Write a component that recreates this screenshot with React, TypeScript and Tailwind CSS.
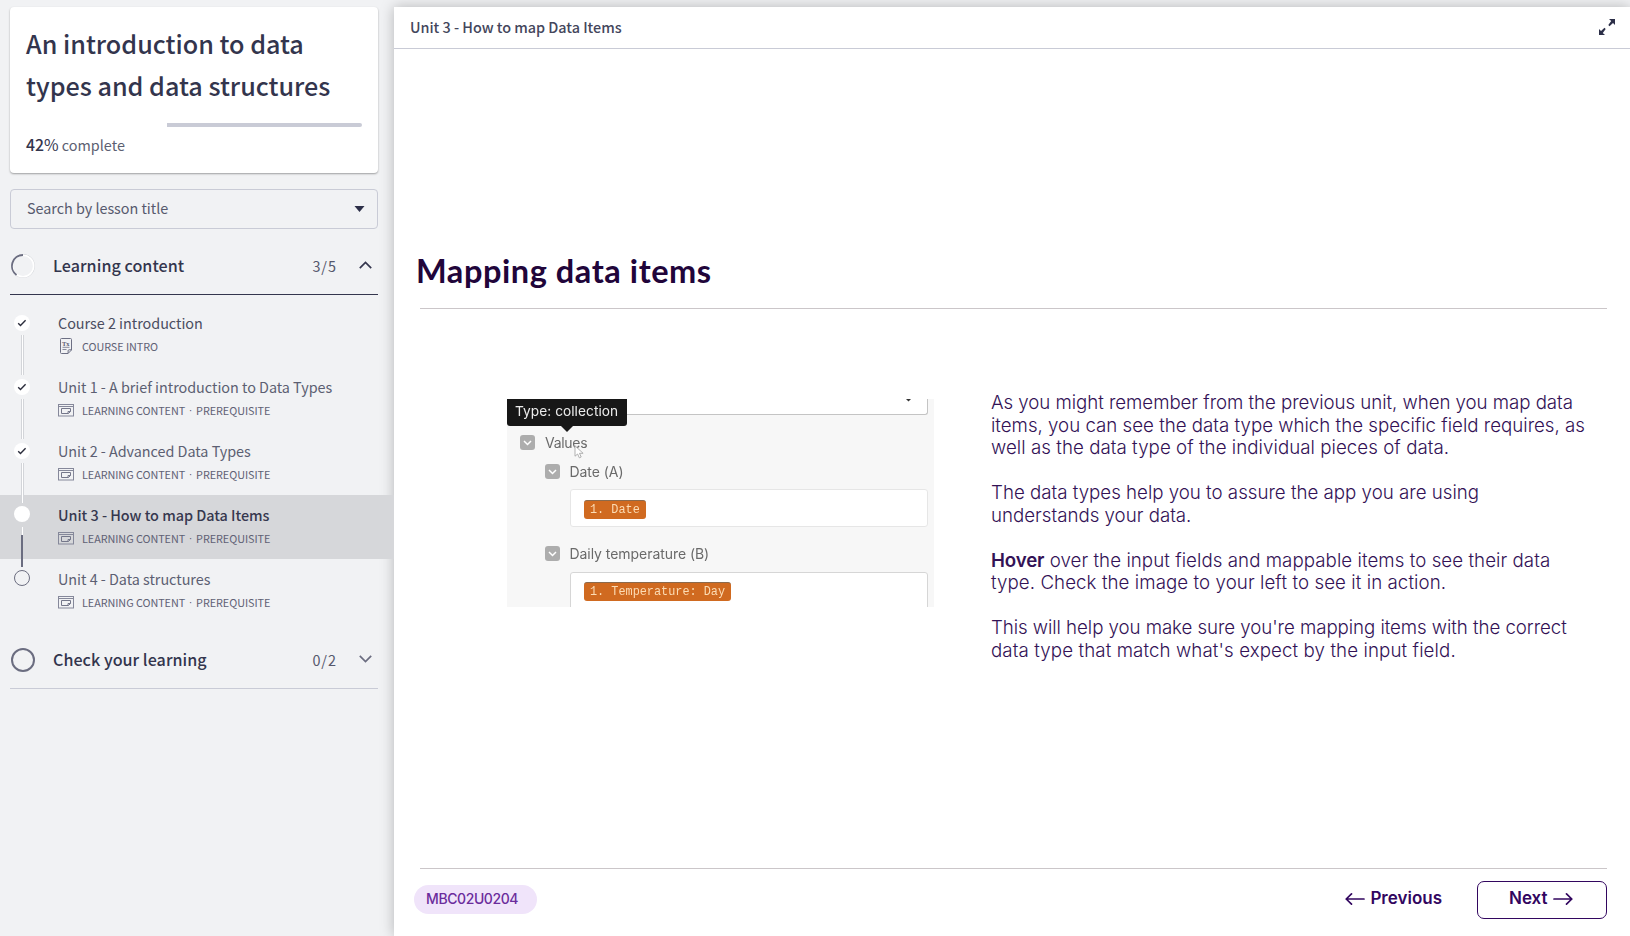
import type { ReactNode } from "react";

type Status = "done" | "current" | "todo";

interface Lesson {
  title: string;
  tags: string[];
  status: Status;
  intro?: boolean;
}

const lessons: Lesson[] = [
  { title: "Course 2 introduction", tags: ["COURSE INTRO"], status: "done", intro: true },
  { title: "Unit 1 - A brief introduction to Data Types", tags: ["LEARNING CONTENT", "PREREQUISITE"], status: "done" },
  { title: "Unit 2 - Advanced Data Types", tags: ["LEARNING CONTENT", "PREREQUISITE"], status: "done" },
  { title: "Unit 3 - How to map Data Items", tags: ["LEARNING CONTENT", "PREREQUISITE"], status: "current" },
  { title: "Unit 4 - Data structures", tags: ["LEARNING CONTENT", "PREREQUISITE"], status: "todo" },
];

function IntroIcon() {
  return (
    <svg width="16" height="16" viewBox="0 0 16 16" fill="none" stroke="#6d7084" strokeWidth="1">
      <path d="M3.5 .5h9a1 1 0 0 1 1 1v10.500l-3.500 3.500H3.500a1 1 0 0 1-1-1v-13a1 1 0 0 1 1-1z" />
      <path d="M13.500 11.800h-2.400a1 1 0 0 0-1 1v2.600" />
      <path d="M4.500 9.300h7M4.500 11.500h4" strokeWidth=".8" />
      <text x="4" y="7.500" fontSize="6.500" fontWeight="700" fontFamily="Liberation Serif, serif" fill="#5a5d72" stroke="none">
        Tx
      </text>
    </svg>
  );
}

function ContentIcon() {
  return (
    <svg width="16" height="14" viewBox="0 0 16 14" fill="none" stroke="#85889a" strokeWidth="1">
      <rect x=".5" y="1.500" width="15" height="11.500" />
      <path d="M.5 3.500h15" />
      <path d="M3.500 5.500h9v3l-2 2h-7z" stroke="#74778a" />
      <path d="M12.500 8.500h-2.500v2" stroke="#74778a" />
    </svg>
  );
}

function StatusDot({ status }: { status: Status }) {
  if (status === "todo") return <span className="-mt-px block size-4 rounded-full border border-[#6c6e80]" />;
  return (
    <span className={`flex size-4 items-center justify-center rounded-full bg-white ${status === "current" ? "-mt-px" : ""}`}>
      {status === "done" && (
        <svg width="10" height="8" viewBox="0 0 10 8" fill="none" stroke="#2b2d3c" strokeWidth="1.4">
          <path d="M1.200 4.200l2.300 2.300L8.600 1.200" />
        </svg>
      )}
    </span>
  );
}

function Connector({ status }: { status: Status }) {
  return (
    <span className="absolute top-8 left-[21px] z-10 flex h-10 w-[3px] flex-col">
      {status === "current" ? (
        <>
          <span className="h-2 w-px self-center bg-white" />
          <span className="w-0.5 flex-1 bg-[#6b6d80]" />
        </>
      ) : (
        <span className="flex-1 border-x border-[#d3d5d9] bg-white" />
      )}
    </span>
  );
}

function LessonRow({ lesson, last }: { lesson: Lesson; last: boolean }) {
  const current = lesson.status === "current";
  return (
    <li className={`relative flex h-16 pl-3.5 ${current ? "bg-[#d6d7da]" : ""}`}>
      <div className="w-11 pt-3">
        <StatusDot status={lesson.status} />
        {!last && <Connector status={lesson.status} />}
      </div>
      <div className="pt-[10px]">
        <p className={`h-5 text-[14.4px] leading-5 tracking-[-0.025px] ${current ? "font-medium text-[#36384f]" : lesson.intro ? "text-[#4a4d60]" : "text-[#5c5f72]"}`}>
          {lesson.title}
        </p>
        <p className="mt-1 flex h-[18px] items-center text-[10.8px] leading-[18px] text-[#5f6175]">
          <span className="mr-2">{lesson.intro ? <IntroIcon /> : <ContentIcon />}</span>
          <span className="tracking-[-0.04px]">{lesson.tags[0]}</span>
          {lesson.tags[1] && (
            <>
              <span className="w-[11px] text-center font-['Liberation_Sans',sans-serif]">·</span>
              <span className="tracking-[-0.04px]">{lesson.tags[1]}</span>
            </>
          )}
        </p>
      </div>
    </li>
  );
}

function SectionHeader({ title, count, open, ring }: { title: string; count: string; open: boolean; ring: ReactNode }) {
  return (
    <div className={`mr-4 ml-[10px] flex h-[58px] items-center border-b pr-1.5 ${open ? "border-[#34364e]" : "border-[#c9cbd6]"}`}>
      <span className="w-[43px] pl-px">{ring}</span>
      <h2 className="-mt-0.5 flex-1 text-[16.100px] leading-6 font-medium tracking-[0.040px] text-[#33354d]">{title}</h2>
      <span className="mr-[22px] text-[14.4px] leading-6 tracking-[1px] text-[#55586c]">{count}</span>
      <svg className="-mt-px" width="13" height="8" viewBox="0 0 13 8" fill="none" stroke={open ? "#34364e" : "#6b6d80"} strokeWidth="1.700">
        <path d={open ? "M.8 7.200l5.700-5.700 5.700 5.700" : "M.8 .8l5.700 5.700L12.200 .8"} />
      </svg>
    </div>
  );
}

function Sidebar() {
  return (
    <aside className="w-[394px] shrink-0 pt-[7px] font-['Noto_Sans_CJK_SC',sans-serif]">
      <div className="mr-4 ml-[10px] h-[166px] rounded bg-white px-4 pt-[15px] shadow-[0_1px_2px_rgba(0,0,0,0.35)]">
        <h1 className="text-[25.150px] leading-[42px] font-medium text-[#33354d]">
          An introduction to data
          <br />
          types and data structures
        </h1>
        <div className="mt-[17px] flex h-1 justify-end">
          <div className="w-[195px] rounded-r bg-[#c9cbd6]" />
        </div>
        <p className="mt-2 h-5 text-[14.4px] leading-5 text-[#5c5f72]">
          <span className="text-[15.800px] text-[#33354d]">
            <span className="font-medium">42</span>%
          </span>{" "}
          complete
        </p>
      </div>
      <div className="mt-4 mr-4 ml-[10px] flex h-10 items-center justify-between rounded border border-[#c9cbd6] pr-3 pl-4 text-[14.4px] text-[#575a6e]">
        <span className="-mt-0.5 leading-5 tracking-[-0.03px]">Search by lesson title</span>
        <svg width="11" height="6" viewBox="0 0 11 6">
          <path d="M.5 0h10L5.500 6z" fill="#2c2f48" />
        </svg>
      </div>
      <div className="mt-2">
        <SectionHeader
          title="Learning content"
          count="3/5"
          open
          ring={
            <svg width="24" height="24" viewBox="0 0 24 24" fill="none">
              <circle cx="12" cy="12" r="11.300" stroke="#d3d5d9" strokeWidth="1.200" />
              <circle cx="12" cy="12" r="10.700" stroke="#fff" strokeWidth="1.600" />
              <path d="M12 1A11 11 0 0 0 5.530 20.900" stroke="#6b6d80" strokeWidth="1.800" />
            </svg>
          }
        />
      </div>
      <ul className="mt-2">
        {lessons.map((lesson, i) => (
          <LessonRow key={lesson.title} lesson={lesson} last={i === lessons.length - 1} />
        ))}
      </ul>
      <div className="mt-2">
        <SectionHeader
          title="Check your learning"
          count="0/2"
          open={false}
          ring={<span className="block size-6 rounded-full border-2 border-[#6b6d80]" />}
        />
      </div>
    </aside>
  );
}

function CheckMark() {
  return (
    <span className="flex size-[15px] shrink-0 items-center justify-center rounded-[3px] bg-[#adadad]">
      <svg width="9" height="6" viewBox="0 0 9 6" fill="none" stroke="#fff" strokeWidth="1.500">
        <path d="M1 1l3.500 3.500L8 1" />
      </svg>
    </span>
  );
}

function Tag({ children }: { children: ReactNode }) {
  return (
    <span className="inline-block h-[19px] rounded-[3px] border-t border-[#8c6a4c] bg-[#d06a20] px-1.5 font-['Liberation_Mono',monospace] text-[11.850px] leading-[18px] text-[#fcdcb4]">
      {children}
    </span>
  );
}

function MappingPreview() {
  return (
    <div className="relative h-[208px] w-[427px] overflow-hidden bg-[#f7f7f7] font-['Inter',sans-serif] text-sm text-[#6a6a6a]">
      <div className="blur-[0.5px]">
        <div className="mr-1.5 flex h-4 justify-end rounded-b-[3px] border-r border-b border-[#c4c4c4] bg-white pr-4">
          <svg width="5" height="3" viewBox="0 0 5 3">
            <path d="M0 0h5L2.500 2.500z" fill="#333" />
          </svg>
        </div>
        <div className="mt-5 flex h-[15px] items-center pl-[13px]">
          <CheckMark />
          <span className="ml-2.5 tracking-[-0.3px]">Values</span>
        </div>
        <div className="mt-3.5 flex h-[15px] items-center pl-[38px]">
          <CheckMark />
          <span className="ml-[9.500px] tracking-[-0.050px]">Date (A)</span>
        </div>
        <div className="mt-[10px] ml-[63px] h-[38px] w-[358px] rounded-[3px] border border-[#e6e6e6] bg-white pt-[10px] pl-[13px] leading-none">
          <Tag>1. Date</Tag>
        </div>
        <div className="mt-[19px] flex h-[15px] items-center pl-[38px]">
          <CheckMark />
          <span className="ml-[9.500px] tracking-[-0.050px]">Daily temperature (B)</span>
        </div>
        <div className="mt-[11px] ml-[63px] h-[50px] w-[358px] rounded-t-[3px] border border-[#d6d6d6] bg-white pt-[9px] pl-[13px] leading-none">
          <Tag>1. Temperature: Day</Tag>
        </div>
      </div>
      <div className="absolute top-0 left-0 blur-[0.4px]">
        <div className="h-[27px] w-[120px] rounded-b-[3px] bg-[#171717] pl-2 text-[13.700px] leading-[25px] tracking-[0.050px] text-[#ececec]">
          Type: collection
        </div>
        <svg className="ml-[54px]" width="12" height="6" viewBox="0 0 12 6">
          <path d="M0 0h12L6 6z" fill="#171717" />
        </svg>
      </div>
      <svg className="absolute top-[46px] left-[67px]" width="12" height="14" viewBox="0 0 12 14">
        <path d="M1 .8v10.400l2.600-2.200 1.700 3.800 1.900-.8-1.700-3.700h3.600z" fill="#fff" stroke="#a8a8a8" strokeWidth=".9" />
      </svg>
    </div>
  );
}

function Arrow({ left }: { left?: boolean }) {
  return (
    <svg width="20" height="14" viewBox="0 0 20 14" fill="none" stroke="#32065f" strokeWidth="1.700" strokeLinecap="round" strokeLinejoin="round">
      <path d={left ? "M19 7H1.200M6.500 1.900L1.200 7l5.300 5.100" : "M1 7h17.800M13.500 1.900L18.800 7l-5.300 5.100"} />
    </svg>
  );
}

function LessonView() {
  return (
    <main className="mt-[7px] flex h-[929px] flex-1 flex-col bg-white shadow-[0_0_13px_rgba(0,0,0,0.25)]">
      <header className="flex h-[42px] items-center justify-between border-b border-[#c9cbd6] pr-3.5 pl-4 font-['Noto_Sans_CJK_SC',sans-serif]">
        <h2 className="-mt-px text-[14.4px] leading-5 font-medium tracking-[-0.020px] text-[#44465c]">Unit 3 - How to map Data Items</h2>
        <svg className="-mt-0.5" width="18" height="18" viewBox="0 0 18 18" fill="none">
          <path d="M11 1h6v6l-2-2-3.500 3.200-1.200-1.200L13.200 3zM7 17H1v-6l2 2 3.500-3.200 1.200 1.200L4.800 15z" fill="#2c2f48" />
        </svg>
      </header>
      <section className="flex flex-1 flex-col pr-[23px] pl-[26px] font-['Inter',sans-serif]">
        <h1 className="mt-[202px] -ml-1 font-['Lato',sans-serif] text-[32.500px] leading-[40px] font-bold tracking-[0.560px] text-[#21053a]">
          Mapping data items
        </h1>
        <hr className="mt-[17px] border-[#cbc6c9]" />
        <div className="mt-[83px] flex">
          <div className="mt-[7px] ml-[87px]">
            <MappingPreview />
          </div>
          <div className="ml-[57px] text-[18.700px] leading-[22.500px] font-light whitespace-nowrap text-[#331256]">
            <p>
              <span className="tracking-[-0.050px]">As you might remember from the previous unit, when you map data</span>
              <br />
              items, you can see the data type which the specific field requires, as
              <br />
              <span className="tracking-[0.050px]">well as the data type of the individual pieces of data.</span>
            </p>
            <p className="mt-[22.500px]">
              The data types help you to assure the app you are using
              <br />
              understands your data.
            </p>
            <p className="mt-[22.500px]">
              <span className="font-semibold tracking-[-0.150px]">Hover</span>
              <span className="tracking-[0.060px]"> over the input fields and mappable items to see their data</span>
              <br />
              <span className="tracking-[0.075px]">type. Check the image to your left to see it in action.</span>
            </p>
            <p className="mt-[22.500px]">
              <span className="tracking-[-0.060px]">This will help you make sure you're mapping items with the correct</span>
              <br />
              <span className="tracking-[0.105px]">data type that match what's expect by the input field.</span>
            </p>
          </div>
        </div>
      </section>
      <footer className="mr-[23px] ml-5 h-[68px] font-['Inter',sans-serif]">
        <hr className="ml-1.5 border-[#cbc6c9]" />
        <div className="mt-3 flex h-[38px] items-center">
          <span className="-mt-px flex h-[29px] w-[123px] items-center rounded-full bg-[#f0e4fa] pb-0.5 pl-3 text-[14px] font-medium tracking-[-0.400px] text-[#6b2c9c]">
            MBC02U0204
          </span>
          <button className="ml-auto flex items-center gap-[5px] pb-0.5 text-[17px] font-semibold text-[#32065f]">
            <Arrow left />
            Previous
          </button>
          <button className="ml-[35px] flex h-[38px] w-[130px] items-center gap-[5px] rounded-[7px] border border-[#32065f] pb-0.5 pl-[31px] text-[17px] font-semibold text-[#32065f]">
            Next
            <Arrow />
          </button>
        </div>
      </footer>
    </main>
  );
}

export default function App() {
  return (
    <div className="flex h-[936px] w-[1630px] overflow-hidden bg-[#f1f2f4]">
      <Sidebar />
      <LessonView />
    </div>
  );
}
